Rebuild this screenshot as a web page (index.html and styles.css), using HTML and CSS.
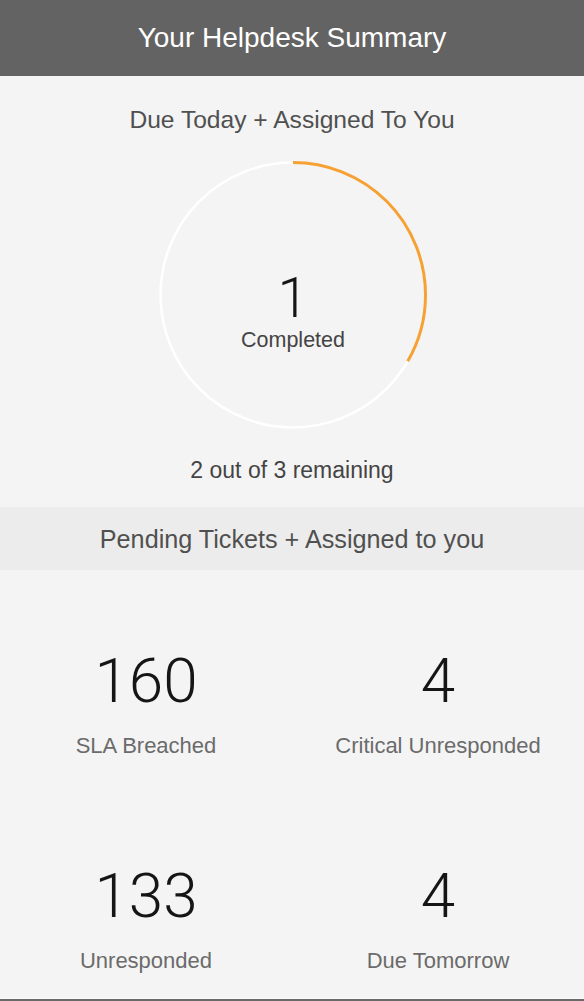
FILE: index.html
```html
<!DOCTYPE html>
<html lang="en">
<head>
<meta charset="utf-8">
<title>Your Helpdesk Summary</title>
<link rel="stylesheet" href="styles.css">
</head>
<body>
<header class="topbar">
  <h1 class="topbar-title">Your Helpdesk Summary</h1>
</header>
<main>
  <section class="due">
    <h2 class="due-title">Due Today + Assigned To You</h2>
    <div class="ring">
      <svg class="ring-svg" width="272" height="272" viewBox="0 0 272 272" aria-hidden="true">
        <circle cx="136" cy="136" r="132.5" fill="none" stroke="#ffffff" stroke-width="2.5"/>
        <circle cx="136" cy="136" r="132.5" fill="none" stroke="#f6a133" stroke-width="3"
                stroke-dasharray="277.5 832.5" transform="rotate(-90 136 136)"/>
      </svg>
      <div class="ring-text">
        <div class="ring-num">1</div>
        <div class="ring-label">Completed</div>
      </div>
    </div>
    <p class="remaining">2 out of 3 remaining</p>
  </section>
  <div class="band">
    <h2 class="band-title">Pending Tickets + Assigned to you</h2>
  </div>
  <section class="stats">
    <div class="stat">
      <div class="stat-num">160</div>
      <div class="stat-label">SLA Breached</div>
    </div>
    <div class="stat">
      <div class="stat-num">4</div>
      <div class="stat-label">Critical Unresponded</div>
    </div>
    <div class="stat">
      <div class="stat-num">133</div>
      <div class="stat-label">Unresponded</div>
    </div>
    <div class="stat">
      <div class="stat-num">4</div>
      <div class="stat-label">Due Tomorrow</div>
    </div>
  </section>
  <div class="footer-bar"></div>
</main>
</body>
</html>
```

FILE: styles.css
```css
html, body {
  margin: 0;
  padding: 0;
}
body {
  background: #f4f4f4;
  font-family: "Liberation Sans", Arial, sans-serif;
  color: #555;
}
.topbar {
  height: 76px;
  background: #636363;
  display: flex;
  align-items: center;
  justify-content: center;
}
.topbar-title {
  margin: 0;
  font-weight: normal;
  font-size: 28px;
  line-height: 32px;
  color: #ffffff;
}
.due {
  display: flex;
  flex-direction: column;
  align-items: center;
  padding-top: 30px;
}
.due-title {
  margin: 0;
  font-weight: normal;
  font-size: 24.6px;
  line-height: 28px;
  color: #505050;
}
.ring {
  margin-top: 25px;
  display: grid;
  width: 272px;
  height: 272px;
  transform: translateX(1px);
}
.ring-svg {
  grid-area: 1 / 1;
  display: block;
}
.ring-text {
  grid-area: 1 / 1;
  display: flex;
  flex-direction: column;
  align-items: center;
  padding-top: 111px;
}
.ring-num {
  font-family: Roboto, "Liberation Sans", sans-serif;
  font-weight: 300;
  font-size: 56px;
  line-height: 56px;
  color: #151515;
}
.ring-label {
  margin-top: 1px;
  font-size: 21.5px;
  line-height: 26px;
  color: #444;
}
.remaining {
  margin: 25px 0 0;
  font-size: 23px;
  line-height: 28px;
  color: #444;
}
.band {
  margin-top: 23px;
  height: 63px;
  background: #ececec;
  display: flex;
  align-items: center;
  justify-content: center;
}
.band-title {
  margin: 0;
  font-weight: normal;
  font-size: 25.2px;
  line-height: 28px;
  color: #505050;
}
.stats {
  display: grid;
  grid-template-columns: 1fr 1fr;
  grid-template-rows: 215px 213px;
}
.stat {
  display: flex;
  flex-direction: column;
  align-items: center;
  padding-top: 80px;
}
.stat-num {
  font-family: Roboto, "Liberation Sans", sans-serif;
  font-weight: 300;
  font-size: 62px;
  line-height: 62px;
  color: #151515;
}
.stat-label {
  margin-top: 21px;
  font-size: 22px;
  line-height: 26px;
  color: #6b6b6b;
}
.footer-bar {
  border-top: 1px solid #fbfbfb;
  height: 12px;
  background: #686868;
}
```
